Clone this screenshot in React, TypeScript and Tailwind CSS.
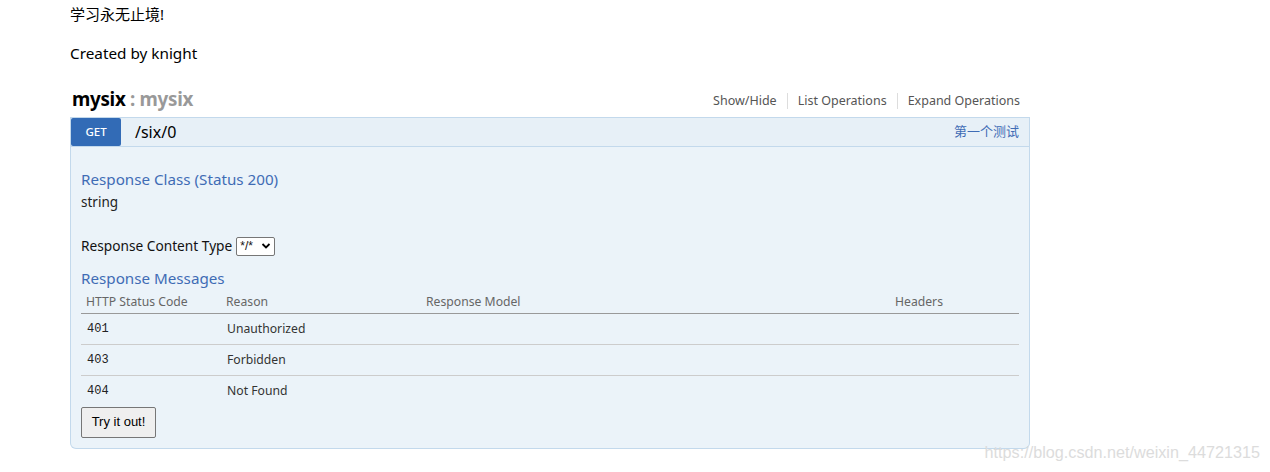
export default function App() {
  const rows = [
    { code: "401", reason: "Unauthorized" },
    { code: "403", reason: "Forbidden" },
    { code: "404", reason: "Not Found" },
  ];

  return (
    <div className="relative h-[472px] w-[1270px] overflow-hidden bg-white font-['Noto_Sans','Noto_Sans_CJK_SC',sans-serif] text-[#000]">
      <div className="ml-[70px] w-[960px]">
        {/* Info */}
        <div className="pt-[4px] text-[15px] leading-[20px]">学习永无止境!</div>
        <div className="mt-[19px] text-[15.3px] leading-[20px]">Created by knight</div>

        {/* Resource heading */}
        <div className="mt-[23px] flex items-end justify-between pr-[10px]">
          <h2 className="pl-[2px] text-[18.8px] font-bold leading-[26px] tracking-[-0.3px]">
            mysix<span className="text-[#999]"> : mysix</span>
          </h2>
          <ul className="flex items-center pb-[3px] text-[12.5px] leading-[16px] text-[#555]">
            <li className="border-r border-[#ddd] pr-[10px]">Show/Hide</li>
            <li className="border-r border-[#ddd] px-[10px]">List Operations</li>
            <li className="pl-[10px]">Expand Operations</li>
          </ul>
        </div>

        {/* Operation */}
        <div className="mt-[5px]">
          <div className="flex h-[30px] items-stretch border border-[#c3d9ec] bg-[#e7f0f7]">
            <span className="flex w-[50px] items-center justify-center rounded-[2px] bg-[#326bb6] text-[11.5px] font-medium text-white">
              GET
            </span>
            <span className="flex items-center pl-[14px] text-[16px] leading-[20px]">/six/0</span>
            <span className="ml-auto flex items-center pr-[10px] text-[13px] text-[#3f6cb5]">第一个测试</span>
          </div>

          <div className="rounded-b-[6px] border border-t-0 border-[#c3d9ec] bg-[#ebf3f9] px-[10px] pb-[10px] pt-[21px]">
            <h4 className="text-[15.2px] leading-[22px] text-[#3f6cb5]">Response Class (Status 200)</h4>
            <div className="mt-[2px] text-[13.5px] leading-[20px] text-[#222]">string</div>

            <div className="mt-[24px] flex items-center text-[13.7px] leading-[20px] text-[#111]">
              Response Content Type
              <span className="ml-[4px] flex h-[19px] w-[39px] items-center justify-between rounded-[2px] border border-[#767676] bg-white px-[3px] font-['Liberation_Sans',sans-serif] text-[12px] leading-none">
                */*
                <svg width="10" height="8" viewBox="0 0 10 8">
                  <path d="M1.5 2 L5 5.5 L8.5 2" fill="none" stroke="#000" strokeWidth="1.8" />
                </svg>
              </span>
            </div>

            <h4 className="mt-[11px] text-[15.2px] leading-[22px] text-[#3f6cb5]">Response Messages</h4>

            <table className="w-full table-fixed border-collapse">
              <thead>
                <tr className="border-b border-[#999] text-left text-[12.2px] leading-[16px] text-[#666]">
                  <th className="w-[140px] px-[5px] pb-[3px] pt-[5px] font-normal">HTTP Status Code</th>
                  <th className="w-[200px] px-[5px] pb-[3px] pt-[5px] font-normal">Reason</th>
                  <th className="px-[5px] pb-[3px] pt-[5px] font-normal">Response Model</th>
                  <th className="w-[129px] px-[5px] pb-[3px] pt-[5px] font-normal">Headers</th>
                </tr>
              </thead>
              <tbody>
                {rows.map((r, i) => (
                  <tr key={r.code} className={i < rows.length - 1 ? "border-b border-[#ccc]" : ""}>
                    <td className="h-[31px] px-[6px] font-['Liberation_Mono',monospace] text-[12px] text-[#222]">{r.code}</td>
                    <td className="h-[31px] px-[6px] text-[12.2px] text-[#333]">{r.reason}</td>
                    <td className="h-[31px] px-[6px]"></td>
                    <td className="h-[31px] px-[6px]"></td>
                  </tr>
                ))}
              </tbody>
            </table>

            <button className="flex h-[31px] w-[75px] items-center justify-center rounded-[2px] border border-[#767676] bg-[#efefef] font-['Liberation_Sans',sans-serif] text-[13px] text-black">
              Try it out!
            </button>
          </div>
        </div>
      </div>

      {/* watermark */}
      <div className="absolute bottom-[8px] right-[10px] font-['Liberation_Sans',sans-serif] text-[16.2px] text-[#dcdcdc]">
        https://blog.csdn.net/weixin_44721315
      </div>
    </div>
  );
}
